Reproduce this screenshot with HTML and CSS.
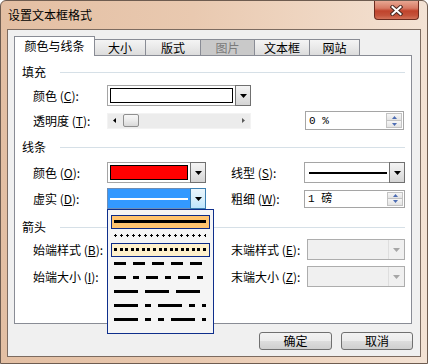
FILE: index.html
```html
<!DOCTYPE html>
<html lang="zh-CN">
<head>
<meta charset="utf-8">
<title>设置文本框格式</title>
<link rel="stylesheet" href="styles.css">
</head>
<body>
<div class="window">
  <div class="titlebar">
    <span class="title">设置文本框格式</span>
    <div class="close">
      <svg width="13" height="11" viewBox="0 0 13 11">
        <path d="M2.5 2 L10.5 9 M10.5 2 L2.5 9" stroke="#4a2a22" stroke-width="4" stroke-linecap="square"/>
        <path d="M2.5 2 L10.5 9 M10.5 2 L2.5 9" stroke="#ffffff" stroke-width="2" stroke-linecap="square"/>
      </svg>
    </div>
  </div>
  <div class="client">
    <div class="tabs">
      <div class="tab active w-color">颜色与线条</div>
      <div class="tab w-size">大小</div>
      <div class="tab w-layout">版式</div>
      <div class="tab disabled w-pic">图片</div>
      <div class="tab w-box">文本框</div>
      <div class="tab w-web">网站</div>
    </div>
    <div class="panel">
      <div class="section m-fill"><span>填充</span><i class="rule"></i></div>
      <div class="row h21 m-c">
        <span class="lbl">颜色 (<u>C</u>):</span>
        <div class="combo w144">
          <div class="swatch-area"><div class="swatch"></div></div>
          <div class="ddbtn"><svg width="7" height="4" viewBox="0 0 7 4"><path d="M0 0H7L3.5 4Z" fill="#000"/></svg></div>
        </div>
      </div>
      <div class="row h19 m-t">
        <span class="lbl">透明度 (<u>T</u>):</span>
        <div class="slider">
          <svg class="arrow-l" width="3" height="5" viewBox="0 0 3 5"><path d="M3 0V5L0 2.5Z" fill="#000"/></svg>
          <div class="thumb"></div>
          <svg class="arrow-r" width="3" height="5" viewBox="0 0 3 5"><path d="M0 0V5L3 2.5Z" fill="#5a5a5a"/></svg>
        </div>
        <div class="rgroup">
          <span class="rlbl"></span>
          <div class="spin w99 mr1">
            <span class="val">0 %</span>
            <div class="spinbtn">
              <div class="half"><svg width="5" height="3" viewBox="0 0 5 3"><path d="M0 3H5L2.5 0Z" fill="#4d6db3"/></svg></div>
              <div class="half"><svg width="5" height="3" viewBox="0 0 5 3"><path d="M0 0H5L2.5 3Z" fill="#4d6db3"/></svg></div>
            </div>
          </div>
        </div>
      </div>

      <div class="section m-line"><span>线条</span><i class="rule"></i></div>
      <div class="row h21 m-o">
        <span class="lbl">颜色 (<u>O</u>):</span>
        <div class="combo w99">
          <div class="swatch-area"><div class="swatch red"></div></div>
          <div class="ddbtn"><svg width="7" height="4" viewBox="0 0 7 4"><path d="M0 0H7L3.5 4Z" fill="#000"/></svg></div>
        </div>
        <div class="rgroup">
          <span class="rlbl">线型 (<u>S</u>):</span>
          <div class="combo w101">
            <div class="swatch-area linearea"><i class="sample-line"></i></div>
            <div class="ddbtn"><svg width="7" height="4" viewBox="0 0 7 4"><path d="M0 0H7L3.5 4Z" fill="#000"/></svg></div>
          </div>
        </div>
      </div>
      <div class="row h21 m-d">
        <span class="lbl">虚实 (<u>D</u>):</span>
        <div class="combo w99 focus">
          <div class="swatch-area sel"><i class="white-line"></i></div>
          <div class="ddbtn hot"><svg width="7" height="4" viewBox="0 0 7 4"><path d="M0 0H7L3.5 4Z" fill="#000"/></svg></div>
        </div>
        <div class="rgroup">
          <span class="rlbl">粗细 (<u>W</u>):</span>
          <div class="spin w101 h18">
            <span class="val">1 磅</span>
            <div class="spinbtn">
              <div class="half"><svg width="5" height="3" viewBox="0 0 5 3"><path d="M0 3H5L2.5 0Z" fill="#4d6db3"/></svg></div>
              <div class="half"><svg width="5" height="3" viewBox="0 0 5 3"><path d="M0 0H5L2.5 3Z" fill="#4d6db3"/></svg></div>
            </div>
          </div>
        </div>
      </div>

      <div class="section m-arrow"><span>箭头</span><i class="rule"></i></div>
      <div class="row h21 m-b">
        <span class="lbl">始端样式 (<u>B</u>):</span>
        <div class="combo w99 disabled">
          <div class="swatch-area"></div>
          <div class="ddbtn off"><svg width="7" height="4" viewBox="0 0 7 4"><path d="M0 0H7L3.5 4Z" fill="#a6a6a6"/></svg></div>
        </div>
        <div class="rgroup">
          <span class="rlbl">末端样式 (<u>E</u>):</span>
          <div class="combo w98 disabled">
            <div class="swatch-area"></div>
            <div class="ddbtn off"><svg width="7" height="4" viewBox="0 0 7 4"><path d="M0 0H7L3.5 4Z" fill="#a6a6a6"/></svg></div>
          </div>
        </div>
      </div>
      <div class="row h21 m-i">
        <span class="lbl">始端大小 (<u>I</u>):</span>
        <div class="combo w99 disabled">
          <div class="swatch-area"></div>
          <div class="ddbtn off"><svg width="7" height="4" viewBox="0 0 7 4"><path d="M0 0H7L3.5 4Z" fill="#a6a6a6"/></svg></div>
        </div>
        <div class="rgroup">
          <span class="rlbl">末端大小 (<u>Z</u>):</span>
          <div class="combo w98 disabled">
            <div class="swatch-area"></div>
            <div class="ddbtn off"><svg width="7" height="4" viewBox="0 0 7 4"><path d="M0 0H7L3.5 4Z" fill="#a6a6a6"/></svg></div>
          </div>
        </div>
      </div>
    </div>
    <div class="buttons">
      <div class="btn w73">确定</div>
      <div class="btn w72">取消</div>
    </div>
  </div>

  <div class="popup">
    <div class="opt selected">
      <svg width="92" height="3"><rect width="92" height="3" fill="#000"/></svg>
    </div>
    <div class="opt">
      <svg width="92" height="3">
        <defs>
          <pattern id="plusdots" width="6" height="3" patternUnits="userSpaceOnUse">
            <rect x="0" y="1" width="3" height="1" fill="#000"/>
            <rect x="1" y="0" width="1" height="3" fill="#000"/>
          </pattern>
        </defs>
        <rect width="92" height="3" fill="url(#plusdots)"/>
      </svg>
    </div>
    <div class="opt hover">
      <svg width="92" height="3" fill="#000">
        <rect x="0" width="3" height="3"/><rect x="6" width="3" height="3"/><rect x="11" width="3" height="3"/><rect x="17" width="3" height="3"/><rect x="22" width="3" height="3"/><rect x="28" width="3" height="3"/><rect x="33" width="3" height="3"/><rect x="39" width="3" height="3"/><rect x="45" width="3" height="3"/><rect x="50" width="3" height="3"/><rect x="56" width="3" height="3"/><rect x="61" width="3" height="3"/><rect x="67" width="3" height="3"/><rect x="72" width="3" height="3"/><rect x="78" width="3" height="3"/><rect x="83" width="3" height="3"/><rect x="89" width="3" height="3"/>
      </svg>
    </div>
    <div class="opt">
      <svg width="92" height="3"><line x1="0" y1="1.5" x2="92" y2="1.5" stroke="#000" stroke-width="3" stroke-dasharray="12 7"/></svg>
    </div>
    <div class="opt">
      <svg width="92" height="3"><line x1="0" y1="1.5" x2="92" y2="1.5" stroke="#000" stroke-width="3" stroke-dasharray="12 7 6 7"/></svg>
    </div>
    <div class="opt">
      <svg width="92" height="3"><line x1="0" y1="1.5" x2="92" y2="1.5" stroke="#000" stroke-width="3" stroke-dasharray="24 7"/></svg>
    </div>
    <div class="opt">
      <svg width="92" height="3"><line x1="0" y1="1.5" x2="92" y2="1.5" stroke="#000" stroke-width="3" stroke-dasharray="24 7 6 7"/></svg>
    </div>
    <div class="opt">
      <svg width="92" height="3"><line x1="0" y1="1.5" x2="92" y2="1.5" stroke="#000" stroke-width="3" stroke-dasharray="24 7 6 7 6 7"/></svg>
    </div>
  </div>
</div>
</body>
</html>
```

FILE: styles.css
```css
* { box-sizing: border-box; }
html, body { margin: 0; padding: 0; }
body {
  width: 428px;
  height: 364px;
  overflow: hidden;
  background: #ffffff;
  font-family: "Noto Sans CJK SC", "Noto Sans", sans-serif;
  font-size: 12px;
  line-height: 14px;
  color: #000;
}
u { text-decoration: underline; text-underline-offset: 1px; }

.window {
  position: relative;
  width: 428px;
  height: 364px;
  border: 1px solid #6e5c50;
  border-radius: 6px 6px 0 0;
  background: linear-gradient(90deg, #e3bfa3 0%, #e9c9b0 45%, #f0d9c6 80%, #f3e2d4 100%);
  display: flex;
  flex-direction: column;
}

.titlebar {
  height: 28px;
  flex: none;
  display: flex;
  align-items: center;
  padding-left: 7px;
}
.title { flex: 1; font-size: 12px; }
.close {
  align-self: flex-start;
  width: 45px;
  height: 19px;
  margin-right: 8px;
  border: 1px solid #6b2b1f;
  border-top: none;
  border-radius: 0 0 4px 4px;
  background: linear-gradient(#e8a792 0%, #d77a64 40%, #c0432c 55%, #c4523a 80%, #d3735a 100%);
  display: flex;
  align-items: center;
  justify-content: center;
}

.client {
  flex: 1;
  margin: 0 6px 6px 6px;
  border: 1px solid #7c6b60;
  background: #f0f0f0;
  padding: 6px 7px 0 6px;
  display: flex;
  flex-direction: column;
}

/* tabs */
.tabs {
  height: 19px;
  display: flex;
  align-items: flex-end;
  flex: none;
}
.tab {
  height: 16px;
  margin-left: -1px;
  border: 1px solid #898c95;
  border-bottom: none;
  background: linear-gradient(#f4f4f4 0%, #e9e9e9 50%, #dcdcdc 100%);
  text-align: center;
  line-height: 15px;
  white-space: nowrap;
}
.tab.active {
  height: 20px;
  margin-left: 0;
  margin-bottom: -1px;
  background: #fff;
  position: relative;
  z-index: 1;
  line-height: 18px;
}
.tab.disabled { background: #c9c9c9; color: #7a7a7a; }
.w-color { width: 81px; }
.w-size { width: 52px; }
.w-layout { width: 56px; }
.w-pic { width: 55px; }
.w-box { width: 56px; }
.w-web { width: 51px; }

.panel {
  width: 398px;
  height: 269px;
  flex: none;
  border: 1px solid #898c95;
  background: #fff;
  padding: 0 6px 0 7px;
}

.section {
  height: 18px;
  display: flex;
  align-items: center;
}
.section .rule {
  flex: 1;
  height: 1px;
  margin-left: 14px;
  background: #d6e0e7;
}
.m-fill { margin-top: 7px; }
.m-c { margin-top: 4px; }
.m-t { margin-top: 5px; }
.m-line { margin-top: 8px; }
.m-o { margin-top: 6px; }
.m-d { margin-top: 5px; }
.m-arrow { margin-top: 9px; }
.m-b { margin-top: 3px; }
.m-i { margin-top: 6px; }

.row {
  display: flex;
  align-items: center;
  padding-left: 11px;
}
.h21 { height: 21px; }
.h19 { height: 19px; }
.lbl { width: 74px; flex: none; white-space: nowrap; }
.rgroup {
  margin-left: auto;
  width: 174px;
  display: flex;
  align-items: center;
}
.rlbl { flex: 1; white-space: nowrap; }

/* combos */
.combo {
  height: 21px;
  display: flex;
  border: 1px solid #a5a5a5;
  background: #fff;
  flex: none;
}
.w144 { width: 144px; }
.w99 { width: 99px; }
.w101 { width: 101px; }
.w98 { width: 98px; }
.mr1 { margin-right: 1px; }
.swatch-area { flex: 1; padding: 2px; display: flex; }
.swatch { flex: 1; border: 1px solid #000; background: #fff; }
.swatch.red { background: #ff0000; }
.ddbtn {
  width: 16px;
  flex: none;
  margin: -1px -1px -1px 0;
  border: 1px solid #707070;
  background: linear-gradient(#f4f4f4 0%, #e6e6e6 50%, #d4d4d4 100%);
  display: flex;
  align-items: center;
  justify-content: center;
}
.ddbtn.hot {
  border-color: #3c7fb1;
  background: linear-gradient(#eaf6fd 0%, #d9f0fc 50%, #bee6fd 100%);
}
.combo.focus { border-color: #6e8db5; }
.swatch-area.sel {
  background: #3399ff;
  padding: 0 2px;
  align-items: center;
}
.white-line { flex: 1; height: 2px; background: #fff; }
.swatch-area.linearea { padding: 0 2px 0 4px; align-items: center; }
.sample-line { flex: 1; height: 2px; background: #000; }

.combo.disabled { background: #f0f0f0; border-color: #adadad; }
.ddbtn.off {
  margin: 0;
  border: none;
  border-left: 1px solid #dedede;
  background: #f0f0f0;
}

/* slider */
.slider {
  width: 144px;
  height: 16px;
  flex: none;
  background: #ececec;
  border: 1px solid #f3f3f3;
  display: flex;
  align-items: center;
  padding: 0 5px;
}
.arrow-l { flex: none; }
.thumb {
  width: 16px;
  height: 13px;
  margin-left: 7px;
  border: 1px solid #8f8f8f;
  border-radius: 2px;
  background: linear-gradient(#f7f7f7 0%, #ebebeb 50%, #d8d8d8 100%);
}
.arrow-r { margin-left: auto; flex: none; }

/* spin */
.spin {
  height: 19px;
  flex: none;
  display: flex;
  align-items: center;
  border: 1px solid #a5a5a5;
  background: #fff;
  padding: 1px 1px 1px 3px;
}
.spin.h18 { height: 18px; }
.val {
  flex: 1;
  white-space: pre;
  font-family: "Liberation Mono", "Noto Sans CJK SC", monospace;
  font-size: 11px;
}
.spinbtn {
  width: 16px;
  height: 100%;
  display: flex;
  flex-direction: column;
  border: 1px solid #c3c3c3;
}
.half {
  flex: 1;
  display: flex;
  align-items: center;
  justify-content: center;
  background: linear-gradient(#f6f6f6, #e3e3e3);
}
.half + .half { border-top: 1px solid #c3c3c3; }

/* buttons */
.buttons {
  margin-top: 8px;
  display: flex;
  justify-content: flex-end;
  gap: 9px;
}
.btn {
  height: 18px;
  border: 1px solid #707070;
  border-radius: 3px;
  background: linear-gradient(#f2f2f2 0%, #ebebeb 50%, #dddddd 51%, #cfcfcf 100%);
  text-align: center;
  line-height: 16px;
}
.w73 { width: 73px; }
.w72 { width: 72px; }

/* dropdown list */
.popup {
  position: absolute;
  left: 106px;
  top: 208px;
  width: 107px;
  height: 125px;
  border: 1px solid #0f2f8c;
  background: #f5f5f5;
  padding: 5px 3px 0 3px;
  z-index: 5;
}
.opt {
  height: 14px;
  border: 1px solid transparent;
  padding: 4px 2px 0 2px;
}
.opt svg { display: block; shape-rendering: crispEdges; }
.opt.selected { background: #ffc46f; border-color: #0c2a86; }
.opt.hover { background: #fff1cc; border-color: #0c2a86; }
```
